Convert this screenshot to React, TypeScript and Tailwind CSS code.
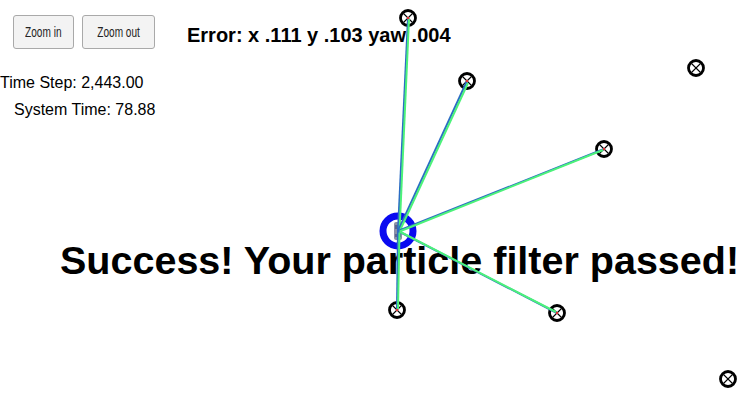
import React from "react";

const landmarks: [number, number][] = [
  [408, 18],
  [467, 81],
  [696, 68],
  [604, 149],
  [397, 310],
  [557, 313],
  [728, 379],
];

// observed landmarks: [blue end, green end]
const observations: [number, number, number, number][] = [
  [408, 18, 409, 19],
  [467, 81, 468, 83],
  [604, 149, 603, 150],
  [397, 310, 398, 309],
  [557, 313, 556, 312],
];

const car = { x: 398, y: 231 };

function Landmark({ x, y }: { x: number; y: number }) {
  return (
    <g>
      <circle cx={x} cy={y} r={7.5} fill="white" stroke="black" strokeWidth={2.8} />
      <line x1={x - 4.5} y1={y - 4.5} x2={x + 4.5} y2={y + 4.5} stroke="black" strokeWidth={1.1} />
      <line x1={x + 4.5} y1={y - 4.5} x2={x - 4.5} y2={y + 4.5} stroke="black" strokeWidth={1.1} />
    </g>
  );
}

function MapLayer() {
  return (
    <svg className="absolute inset-0 pointer-events-none" width={753} height={402} viewBox="0 0 753 402">
      {/* vehicle ring */}
      <circle cx={car.x} cy={car.y} r={15} fill="none" stroke="#0a0af0" strokeWidth={7} />
      <rect x={car.x - 4} y={car.y - 9} width={8} height={18} rx={2} fill="#8a8fa8" />
      <rect x={car.x - 3} y={car.y - 6} width={6} height={4} fill="#5d6490" />
      <rect x={car.x - 3} y={car.y + 3} width={6} height={3} fill="#5d6490" />
      {landmarks.map(([x, y]) => (
        <Landmark key={`${x}-${y}`} x={x} y={y} />
      ))}
      {observations.map(([bx, by, gx, gy]) => (
        <g key={`${bx}-${by}`}>
          <line x1={car.x} y1={car.y} x2={bx} y2={by} stroke="#2b6cc4" strokeWidth={2} />
          <line x1={car.x + 1.5} y1={car.y + 0.5} x2={gx} y2={gy} stroke="#4cf27a" strokeWidth={2} />
          <circle cx={bx} cy={by} r={1.2} fill="#e03030" />
        </g>
      ))}
    </svg>
  );
}

export default function App() {
  return (
    <div className="relative w-[753px] h-[402px] overflow-hidden bg-white text-black font-['Liberation_Sans',Arial,sans-serif]">
      <div className="flex items-start pt-[15px] pl-[13px]">
        <button
          type="button"
          className="flex h-[34px] w-[61px] items-center justify-center rounded-[3px] border border-[#a9a9a9] bg-[#f3f3f3] text-[14px] text-[#222]"
        >
          <span className="inline-block scale-x-[0.72] whitespace-nowrap">Zoom in</span>
        </button>
        <button
          type="button"
          className="ml-[8px] flex h-[34px] w-[73px] items-center justify-center rounded-[3px] border border-[#a9a9a9] bg-[#f3f3f3] text-[14px] text-[#222]"
        >
          <span className="inline-block scale-x-[0.72] whitespace-nowrap">Zoom out</span>
        </button>
        <div className="ml-[32px] mt-[8px] text-[20px] font-bold leading-[24px] whitespace-nowrap">
          Error: x .111 y .103 yaw .004
        </div>
      </div>
      <div className="mt-[25px] text-[16px] leading-[18px]">Time Step: 2,443.00</div>
      <div className="mt-[9px] pl-[14px] text-[16px] leading-[18px]">System Time: 78.88</div>
      <div className="mt-[119px] pl-[60px] text-[39.5px] font-bold leading-[44px] whitespace-nowrap">
        Success! Your particle filter passed!
      </div>
      <MapLayer />
    </div>
  );
}
